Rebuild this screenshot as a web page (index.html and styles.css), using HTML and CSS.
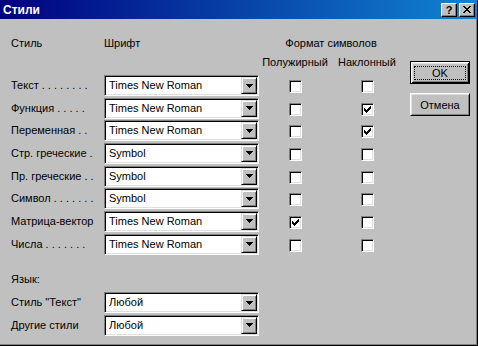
FILE: index.html
```html
<!DOCTYPE html>
<html lang="ru">
<head>
    <meta charset="UTF-8">
    <title>Стили</title>
    <link rel="stylesheet" href="styles.css">
</head>
<body>
    <div class="window">
        <div class="titlebar">
            <span class="title">Стили</span>
            <div class="caption-btns">
                <span class="cap-btn help">?</span>
                <span class="cap-btn close">
                    <svg width="8" height="7" viewBox="0 0 8 7" shape-rendering="crispEdges"><path d="M0 0h2v1h1v1h2V1h1V0h2v1H7v1H6v1H5v1h1v1h1v1h1v1H6V6H5V5H3v1H2v1H0V6h1V5h1V4h1V3H2V2H1V1H0z" fill="#000"/></svg>
                </span>
            </div>
        </div>

        <div class="body">
            <div class="main">
                <!-- style table -->
                <div class="styles">
                    <div class="hdr">Стиль</div>
                    <div class="hdr">Шрифт</div>
                    <div class="hdr format">Формат символов</div>
                    <div class="sub"></div>
                    <div class="sub"></div>
                    <div class="sub center">Полужирный</div>
                    <div class="sub center">Наклонный</div>

                    <div class="label">Текст . . . . . . . .</div>
                    <div class="combo"><span class="value">Times New Roman</span><span class="dd-btn"><svg width="7" height="4" viewBox="0 0 7 4" shape-rendering="crispEdges"><path d="M0 0h7v1H6v1H5v1H4v1H3V3H2V2H1V1H0z"/></svg></span></div>
                    <div class="cell"><span class="check"></span></div>
                    <div class="cell"><span class="check"></span></div>

                    <div class="label">Функция . . . . .</div>
                    <div class="combo"><span class="value">Times New Roman</span><span class="dd-btn"><svg width="7" height="4" viewBox="0 0 7 4" shape-rendering="crispEdges"><path d="M0 0h7v1H6v1H5v1H4v1H3V3H2V2H1V1H0z"/></svg></span></div>
                    <div class="cell"><span class="check"></span></div>
                    <div class="cell"><span class="check"><svg width="7" height="7" viewBox="0 0 7 7" shape-rendering="crispEdges"><path d="M0 2h1v3H0zM1 3h1v3H1zM2 4h1v3H2zM3 3h1v3H3zM4 2h1v3H4zM5 1h1v3H5zM6 0h1v3H6z"/></svg></span></div>

                    <div class="label">Переменная . .</div>
                    <div class="combo"><span class="value">Times New Roman</span><span class="dd-btn"><svg width="7" height="4" viewBox="0 0 7 4" shape-rendering="crispEdges"><path d="M0 0h7v1H6v1H5v1H4v1H3V3H2V2H1V1H0z"/></svg></span></div>
                    <div class="cell"><span class="check"></span></div>
                    <div class="cell"><span class="check"><svg width="7" height="7" viewBox="0 0 7 7" shape-rendering="crispEdges"><path d="M0 2h1v3H0zM1 3h1v3H1zM2 4h1v3H2zM3 3h1v3H3zM4 2h1v3H4zM5 1h1v3H5zM6 0h1v3H6z"/></svg></span></div>

                    <div class="label">Стр. греческие .</div>
                    <div class="combo"><span class="value">Symbol</span><span class="dd-btn"><svg width="7" height="4" viewBox="0 0 7 4" shape-rendering="crispEdges"><path d="M0 0h7v1H6v1H5v1H4v1H3V3H2V2H1V1H0z"/></svg></span></div>
                    <div class="cell"><span class="check"></span></div>
                    <div class="cell"><span class="check"></span></div>

                    <div class="label">Пр. греческие . .</div>
                    <div class="combo"><span class="value">Symbol</span><span class="dd-btn"><svg width="7" height="4" viewBox="0 0 7 4" shape-rendering="crispEdges"><path d="M0 0h7v1H6v1H5v1H4v1H3V3H2V2H1V1H0z"/></svg></span></div>
                    <div class="cell"><span class="check"></span></div>
                    <div class="cell"><span class="check"></span></div>

                    <div class="label">Символ . . . . . . .</div>
                    <div class="combo"><span class="value">Symbol</span><span class="dd-btn"><svg width="7" height="4" viewBox="0 0 7 4" shape-rendering="crispEdges"><path d="M0 0h7v1H6v1H5v1H4v1H3V3H2V2H1V1H0z"/></svg></span></div>
                    <div class="cell"><span class="check"></span></div>
                    <div class="cell"><span class="check"></span></div>

                    <div class="label">Матрица-вектор</div>
                    <div class="combo"><span class="value">Times New Roman</span><span class="dd-btn"><svg width="7" height="4" viewBox="0 0 7 4" shape-rendering="crispEdges"><path d="M0 0h7v1H6v1H5v1H4v1H3V3H2V2H1V1H0z"/></svg></span></div>
                    <div class="cell"><span class="check"><svg width="7" height="7" viewBox="0 0 7 7" shape-rendering="crispEdges"><path d="M0 2h1v3H0zM1 3h1v3H1zM2 4h1v3H2zM3 3h1v3H3zM4 2h1v3H4zM5 1h1v3H5zM6 0h1v3H6z"/></svg></span></div>
                    <div class="cell"><span class="check"></span></div>

                    <div class="label">Числа . . . . . . .</div>
                    <div class="combo"><span class="value">Times New Roman</span><span class="dd-btn"><svg width="7" height="4" viewBox="0 0 7 4" shape-rendering="crispEdges"><path d="M0 0h7v1H6v1H5v1H4v1H3V3H2V2H1V1H0z"/></svg></span></div>
                    <div class="cell"><span class="check"></span></div>
                    <div class="cell"><span class="check"></span></div>
                </div>

                <!-- language -->
                <div class="lang-title">Язык:</div>
                <div class="lang">
                    <div class="label">Стиль &quot;Текст&quot;</div>
                    <div class="combo"><span class="value">Любой</span><span class="dd-btn"><svg width="7" height="4" viewBox="0 0 7 4" shape-rendering="crispEdges"><path d="M0 0h7v1H6v1H5v1H4v1H3V3H2V2H1V1H0z"/></svg></span></div>
                    <div class="label">Другие стили</div>
                    <div class="combo"><span class="value">Любой</span><span class="dd-btn"><svg width="7" height="4" viewBox="0 0 7 4" shape-rendering="crispEdges"><path d="M0 0h7v1H6v1H5v1H4v1H3V3H2V2H1V1H0z"/></svg></span></div>
                </div>
            </div>

            <div class="buttons">
                <div class="btn default"><span class="focus">OK</span></div>
                <div class="btn">Отмена</div>
            </div>
        </div>
    </div>
</body>
</html>
```

FILE: styles.css
```css
* {
    box-sizing: border-box;
}
body {
    margin: 0;
    background-color: #c0c0c0;
    font-family: "Liberation Sans", Arial, sans-serif;
    font-size: 11px;
    color: #000;
}
.window {
    width: 478px;
    height: 346px;
    background-color: #c0c0c0;
    border-right: 1px solid #000;
    border-bottom: 1px solid #000;
    box-shadow: inset -1px -1px #808080;
    overflow: hidden;
}

/* title bar */
.titlebar {
    height: 19px;
    background: linear-gradient(to right, #000080, #1084d0);
    display: flex;
    align-items: center;
    justify-content: space-between;
    padding: 0 2px 0 3px;
}
.title {
    color: #fff;
    font-weight: bold;
    font-size: 12px;
}
.caption-btns {
    display: flex;
    gap: 2px;
}
.cap-btn {
    width: 16px;
    height: 14px;
    background-color: #c0c0c0;
    border: 1px solid;
    border-color: #fff #000 #000 #fff;
    box-shadow: inset -1px -1px #808080;
    display: flex;
    align-items: center;
    justify-content: center;
}
.cap-btn.help {
    font-weight: bold;
    font-size: 11px;
    line-height: 12px;
}

/* dialog body */
.body {
    display: flex;
    padding: 14px 0 0 11px;
}
.styles {
    display: grid;
    grid-template-columns: 93px 155px 72px 72px;
    grid-template-rows: 20px 22px repeat(8, 22.67px);
}
.hdr {
    line-height: 20px;
}
.hdr.format {
    grid-column: 3 / 5;
    text-align: center;
}
.sub {
    line-height: 18px;
}
.center {
    text-align: center;
}
.label {
    height: 21px;
    line-height: 21px;
    white-space: nowrap;
}
.combo {
    height: 21px;
    display: flex;
    background-color: #fff;
    border: 1px solid;
    border-color: #808080 #fff #fff #808080;
    box-shadow: inset 1px 1px #000, inset -1px -1px #dfdfdf;
    padding: 1px;
}
.combo .value {
    flex: 1;
    padding-left: 3px;
    line-height: 17px;
}
.dd-btn {
    width: 16px;
    height: 17px;
    background-color: #c0c0c0;
    border: 1px solid;
    border-color: #dfdfdf #000 #000 #dfdfdf;
    box-shadow: inset 1px 1px #fff, inset -1px -1px #808080;
    display: flex;
    align-items: center;
    justify-content: center;
}
.dd-btn svg {
    display: block;
}
.cell {
    display: flex;
    justify-content: center;
}
.check {
    width: 13px;
    height: 13px;
    margin-top: 5px;
    padding: 2px;
    background-color: #fff;
    border: 1px solid;
    border-color: #808080 #fff #fff #808080;
    box-shadow: inset 1px 1px #000, inset -1px -1px #dfdfdf;
}
.check svg {
    display: block;
}

/* language */
.lang-title {
    margin-top: 15px;
    height: 16px;
    line-height: 16px;
}
.lang {
    margin-top: 5px;
    display: grid;
    grid-template-columns: 93px 155px;
    grid-auto-rows: 22.67px;
}

/* buttons */
.buttons {
    margin: 28px 0 0 7px;
    display: flex;
    flex-direction: column;
    gap: 9px;
}
.btn {
    width: 60px;
    height: 23px;
    display: flex;
    align-items: center;
    justify-content: center;
    background-color: #c0c0c0;
    border: 1px solid;
    border-color: #fff #000 #000 #fff;
    box-shadow: inset 1px 1px #dfdfdf, inset -1px -1px #808080;
}
.btn.default {
    border-color: #000;
    box-shadow: inset 1px 1px #fff, inset -1px -1px #000, inset 2px 2px #dfdfdf, inset -2px -2px #808080;
}
.focus {
    width: 52px;
    height: 14px;
    margin-top: 1px;
    border: 1px dotted #000;
    display: flex;
    align-items: center;
    justify-content: center;
}
```
